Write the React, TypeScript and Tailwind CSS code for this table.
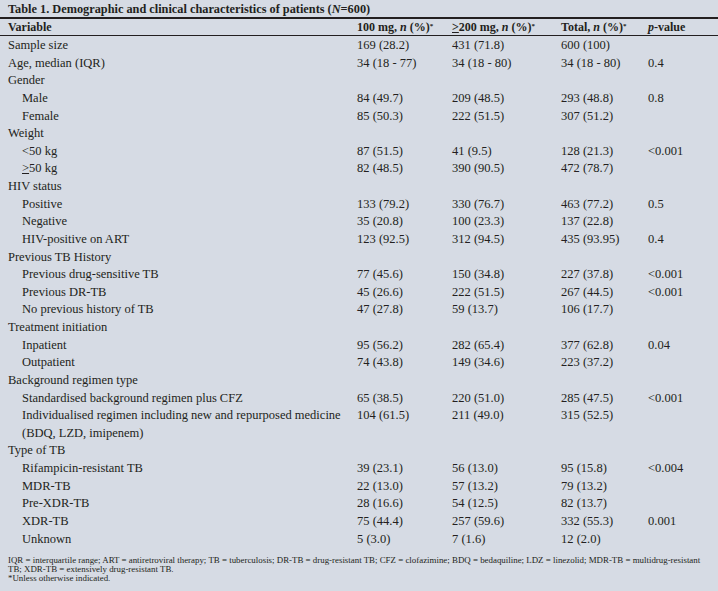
const FONT = { fontFamily: '"Liberation Serif", "Times New Roman", serif' }

type Row = {
  label: React.ReactNode
  indent?: boolean
  a?: string
  b?: string
  t?: string
  p?: string
}

const GE = () => <span className="underline underline-offset-[1px]">&gt;</span>

const ROWS: Row[] = [
  { label: "Sample size", a: "169 (28.2)", b: "431 (71.8)", t: "600 (100)" },
  { label: "Age, median (IQR)", a: "34 (18 - 77)", b: "34 (18 - 80)", t: "34 (18 - 80)", p: "0.4" },
  { label: "Gender" },
  { label: "Male", indent: true, a: "84 (49.7)", b: "209 (48.5)", t: "293 (48.8)", p: "0.8" },
  { label: "Female", indent: true, a: "85 (50.3)", b: "222 (51.5)", t: "307 (51.2)" },
  { label: "Weight" },
  { label: "<50 kg", indent: true, a: "87 (51.5)", b: "41 (9.5)", t: "128 (21.3)", p: "<0.001" },
  { label: <><GE />50 kg</>, indent: true, a: "82 (48.5)", b: "390 (90.5)", t: "472 (78.7)" },
  { label: "HIV status" },
  { label: "Positive", indent: true, a: "133 (79.2)", b: "330 (76.7)", t: "463 (77.2)", p: "0.5" },
  { label: "Negative", indent: true, a: "35 (20.8)", b: "100 (23.3)", t: "137 (22.8)" },
  { label: "HIV-positive on ART", indent: true, a: "123 (92.5)", b: "312 (94.5)", t: "435 (93.95)", p: "0.4" },
  { label: "Previous TB History" },
  { label: "Previous drug-sensitive TB", indent: true, a: "77 (45.6)", b: "150 (34.8)", t: "227 (37.8)", p: "<0.001" },
  { label: "Previous DR-TB", indent: true, a: "45 (26.6)", b: "222 (51.5)", t: "267 (44.5)", p: "<0.001" },
  { label: "No previous history of TB", indent: true, a: "47 (27.8)", b: "59 (13.7)", t: "106 (17.7)" },
  { label: "Treatment initiation" },
  { label: "Inpatient", indent: true, a: "95 (56.2)", b: "282 (65.4)", t: "377 (62.8)", p: "0.04" },
  { label: "Outpatient", indent: true, a: "74 (43.8)", b: "149 (34.6)", t: "223 (37.2)" },
  { label: "Background regimen type" },
  { label: "Standardised background regimen plus CFZ", indent: true, a: "65 (38.5)", b: "220 (51.0)", t: "285 (47.5)", p: "<0.001" },
  { label: "Individualised regimen including new and repurposed medicine", indent: true, a: "104 (61.5)", b: "211 (49.0)", t: "315 (52.5)" },
  { label: "(BDQ, LZD, imipenem)", indent: true },
  { label: "Type of TB" },
  { label: "Rifampicin-resistant TB", indent: true, a: "39 (23.1)", b: "56 (13.0)", t: "95 (15.8)", p: "<0.004" },
  { label: "MDR-TB", indent: true, a: "22 (13.0)", b: "57 (13.2)", t: "79 (13.2)" },
  { label: "Pre-XDR-TB", indent: true, a: "28 (16.6)", b: "54 (12.5)", t: "82 (13.7)" },
  { label: "XDR-TB", indent: true, a: "75 (44.4)", b: "257 (59.6)", t: "332 (55.3)", p: "0.001" },
  { label: "Unknown", indent: true, a: "5 (3.0)", b: "7 (1.6)", t: "12 (2.0)" },
]

const GRID = "grid grid-cols-[349px_95px_109px_87px_1fr] items-center"

export default function App() {
  return (
    <div className="w-[718px] h-[591px] bg-[#d6dbe4] text-[#231f20] overflow-hidden" style={FONT}>
      {/* Title */}
      <div className="pl-[8px] pt-[1px] h-[19px] border-b-2 border-[#231f20] text-[12.3px] leading-[16px] font-bold whitespace-nowrap">
        Table 1. Demographic and clinical characteristics of patients (<i>N</i>=600)
      </div>

      {/* Header */}
      <div className={`${GRID} h-[17px] pl-[8px] border-b border-[#231f20] text-[12px] font-bold leading-[16px]`}>
        <div>Variable</div>
        <div>100 mg, <i>n</i> (%)<sup className="text-[7px]">*</sup></div>
        <div><GE />200 mg, <i>n</i> (%)<sup className="text-[7px]">*</sup></div>
        <div>Total, <i>n</i> (%)<sup className="text-[7px]">*</sup></div>
        <div><i>p</i>-value</div>
      </div>

      {/* Body */}
      <div className="pt-[1px] text-[12.5px]">
        {ROWS.map((r, i) => (
          <div key={i} className={`${GRID} h-[17.64px] leading-[17.64px] pl-[8px] whitespace-nowrap`}>
            <div className={r.indent ? "pl-[14px]" : ""}>{r.label}</div>
            <div>{r.a}</div>
            <div>{r.b}</div>
            <div>{r.t}</div>
            <div>{r.p}</div>
          </div>
        ))}
      </div>

      {/* Footnote */}
      <div className="pl-[8px] pt-[8px] text-[8.9px] leading-[9px]">
        <p className="whitespace-nowrap">
          IQR = interquartile range; ART = antiretroviral therapy; TB = tuberculosis; DR-TB = drug-resistant TB; CFZ = clofazimine; BDQ = bedaquiline; LDZ = linezolid; MDR-TB = multidrug-resistant
        </p>
        <p>TB; XDR-TB = extensively drug-resistant TB.</p>
        <p>*Unless otherwise indicated.</p>
      </div>
    </div>
  )
}
